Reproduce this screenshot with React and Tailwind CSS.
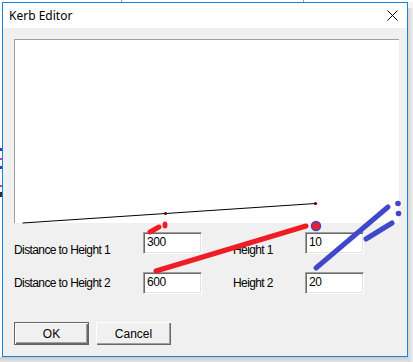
import React from "react";

const ui = { fontFamily: '"Liberation Sans", Arial, sans-serif' };

function Field({ value }) {
  return (
    <div className="w-[59px] h-[22px] bg-white border border-t-[#a0a0a0] border-l-[#a0a0a0] border-b-white border-r-white shadow-[inset_1px_1px_0_#696969,inset_-1px_-1px_0_#e3e3e3] pl-[3px] pt-[2px] text-[12px] leading-[15px] tracking-[-0.4px] text-black">
      {value}
    </div>
  );
}

export default function App() {
  return (
    <div className="relative w-[413px] h-[362px] overflow-hidden bg-[#f4f4f4]" style={ui}>
      {/* background strips */}
      <div className="absolute left-0 top-0 w-[413px] h-[2px] bg-white" />
      <div className="absolute left-[121px] top-0 w-px h-[2px] bg-[#a0a0a0]" />
      <div className="absolute left-[303px] top-0 w-px h-[2px] bg-[#a0a0a0]" />
      <div className="absolute left-0 top-0 w-[2px] h-[362px] bg-white" />
      <div className="absolute left-0 top-[148px] w-[2px] h-[3px] bg-[#2040d0]" />
      <div className="absolute left-0 top-[158px] w-[2px] h-[2px] bg-[#d030d0]" />
      <div className="absolute left-0 top-[166px] w-[2px] h-[3px] bg-[#2040d0]" />
      <div className="absolute left-0 top-[185px] w-[2px] h-[2px] bg-[#d030d0]" />
      <div className="absolute left-0 top-[192px] w-[2px] h-[5px] bg-[#303030]" />
      <div className="absolute left-0 top-[357px] w-[413px] h-[5px] bg-gradient-to-b from-[#c9c9c9] to-[#e6e6e6]" />
      <div className="absolute left-[408px] top-[8px] w-[5px] h-[354px] bg-gradient-to-r from-[#d6d6d6] to-[#ececec]" />

      {/* window */}
      <div className="absolute left-[2px] top-[2px] w-[406px] h-[355px] border border-[#1883d7] bg-[#f0f0f0] flex flex-col">
        <div className="h-[25px] bg-white flex items-center justify-between pl-[6px] pr-[8px]">
          <span className="text-[12px] text-black" style={{ fontFamily: '"Noto Sans", "Open Sans", sans-serif' }}>
            Kerb Editor
          </span>
          <svg width="11" height="11" viewBox="0 0 11 11" className="mr-[1px]">
            <path d="M0.5 0.5 L10.5 10.5 M10.5 0.5 L0.5 10.5" stroke="#000" strokeWidth="1" />
          </svg>
        </div>

        <div className="flex-1 pl-[11px] pt-[11px]">
          {/* canvas */}
          <div className="relative w-[385px] h-[184px] bg-white border-t border-l border-[#a0a0a0]">
            <svg width="385" height="184" className="absolute left-0 top-0">
              <polyline points="7.5,183 150.5,173.5 300.5,163.5" fill="none" stroke="#000" strokeWidth="1" />
              <circle cx="150.5" cy="173.5" r="1.6" fill="#600000" />
              <circle cx="300.5" cy="163.5" r="1.6" fill="#600000" />
            </svg>
          </div>

          {/* row 1 */}
          <div className="flex mt-[9px] h-[22px] text-[12px] tracking-[-0.6px] text-black">
            <div className="w-[129px] pt-[11px] leading-[14px]">Distance to Height 1</div>
            <Field value="300" />
            <div className="w-[31px]" />
            <div className="w-[72px] pt-[11px] leading-[14px]">Height 1</div>
            <Field value="10" />
          </div>

          {/* row 2 */}
          <div className="flex mt-[18px] h-[22px] text-[12px] tracking-[-0.6px] text-black">
            <div className="w-[129px] pt-[4px] leading-[14px]">Distance to Height 2</div>
            <Field value="600" />
            <div className="w-[31px]" />
            <div className="w-[72px] pt-[4px] leading-[14px]">Height 2</div>
            <Field value="20" />
          </div>

          {/* buttons */}
          <div className="flex gap-[7px] mt-[28px]">
            <button className="w-[75px] h-[23px] border border-[#646464] bg-[#f0f0f0] shadow-[inset_1px_1px_0_#fff,inset_-1px_-1px_0_#696969,inset_-2px_-2px_0_#a0a0a0] text-[12px] text-black flex items-center justify-center">
              OK
            </button>
            <button className="w-[75px] h-[23px] bg-[#f0f0f0] shadow-[inset_1px_1px_0_#fff,inset_-1px_-1px_0_#696969,inset_-2px_-2px_0_#a0a0a0] text-[12px] text-black flex items-center justify-center">
              Cancel
            </button>
          </div>
        </div>
      </div>

      {/* hand-drawn annotations */}
      <svg width="413" height="362" className="absolute left-0 top-0 pointer-events-none">
        <g stroke="#ee1c24" strokeWidth="5" strokeLinecap="round" fill="none">
          <line x1="150" y1="232" x2="159" y2="227" />
          <line x1="156" y1="271" x2="306" y2="226" />
        </g>
        <ellipse cx="165" cy="225" rx="2.5" ry="3.5" fill="#ee1c24" />
        <circle cx="316" cy="226" r="4.5" fill="#ee1c24" stroke="#3f48cc" strokeWidth="1.5" />
        <g stroke="#3f48cc" strokeWidth="5" strokeLinecap="round" fill="none">
          <line x1="316" y1="268" x2="388" y2="207" />
          <line x1="366" y1="239" x2="392" y2="223" />
        </g>
        <circle cx="398" cy="203.5" r="2.8" fill="#3f48cc" />
        <circle cx="398.5" cy="213.5" r="2.8" fill="#3f48cc" />
      </svg>
    </div>
  );
}
